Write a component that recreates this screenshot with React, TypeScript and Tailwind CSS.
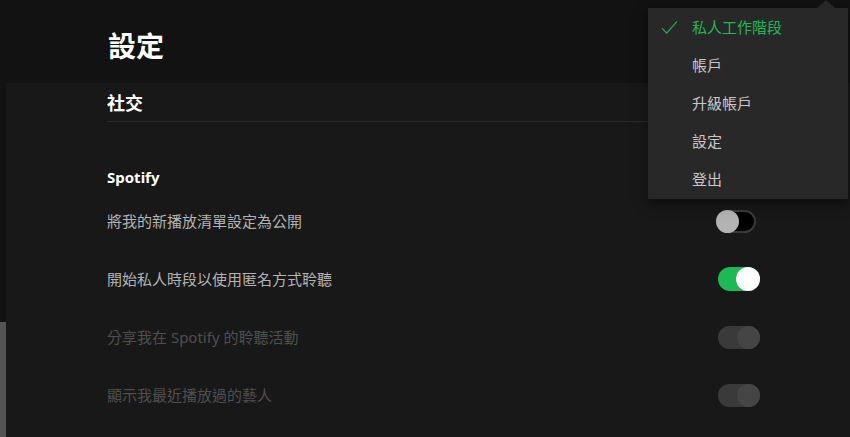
// Settings page with the profile dropdown open

const font = "font-['Noto_Sans','Noto_Sans_CJK_TC',sans-serif]"

const menuItems = ["帳戶", "升級帳戶", "設定", "登出"]

interface Row {
  label: string
  state: "off" | "on" | "disabled"
}

const rows: Row[] = [
  { label: "將我的新播放清單設定為公開", state: "off" },
  { label: "開始私人時段以使用匿名方式聆聽", state: "on" },
  { label: "分享我在 Spotify 的聆聽活動", state: "disabled" },
  { label: "顯示我最近播放過的藝人", state: "disabled" },
]

function Toggle({ state }: { state: Row["state"] }) {
  if (state === "off") {
    return (
      <span className="mr-[4px] flex h-[23px] w-[40px] items-center rounded-full border-2 border-[#3a3a3a] bg-black">
        <span className="-ml-[2px] h-[23px] w-[23px] rounded-full bg-[#b3b3b3]" />
      </span>
    )
  }
  if (state === "on") {
    return (
      <span className="flex h-[24px] w-[42px] items-center justify-end rounded-full bg-[#1db954]">
        <span className="h-[24px] w-[24px] rounded-full bg-white" />
      </span>
    )
  }
  return (
    <span className="flex h-[23px] w-[42px] items-center justify-end rounded-full bg-[#3a3a3a]">
      <span className="h-[23px] w-[23px] rounded-full bg-[#454545]" />
    </span>
  )
}

function Dropdown() {
  return (
    <div className="absolute top-0 right-[2px] w-[200px]">
      <div className="flex justify-end pr-[13px]">
        <span className="h-0 w-0 border-x-[9px] border-b-[8px] border-x-transparent border-b-[#282828]" />
      </div>
      <ul className="flex h-[191px] flex-col bg-[#282828] shadow-[0_4px_12px_rgba(0,0,0,0.5)]">
        <li className="flex h-[38px] items-center gap-[14px] pl-[13px] text-[15px] text-[#1db954]">
          <svg width="17" height="17" viewBox="0 0 24 24" fill="none" stroke="#1db954" strokeWidth="1.6" strokeLinecap="round" strokeLinejoin="round">
            <path d="M2 13.5 8 20 22 4" />
          </svg>
          私人工作階段
        </li>
        {menuItems.map((item) => (
          <li key={item} className="flex h-[38px] items-center pl-[44px] text-[15px] text-[#c8c8c8]">
            {item}
          </li>
        ))}
      </ul>
    </div>
  )
}

export default function App() {
  return (
    <div className={`relative flex h-[437px] w-[850px] flex-col overflow-hidden bg-[#121212] ${font}`}>
      <header className="h-[83px] shrink-0 pt-[29px] pl-[108px]">
        <h1 className="text-[28px] leading-[34px] font-bold text-white">設定</h1>
      </header>

      <div className="flex flex-1">
        <div className="flex w-[6px] flex-col">
          <div className="h-[239px]" />
          <div className="flex-1 bg-[#535353]" />
        </div>

        <main className="flex-1 bg-[#181818] pl-[101px]">
          <div className="w-[653px]">
            <h2 className="border-b border-[#2a2a2a] pt-[8px] pb-[6px] text-[18px] leading-[24px] font-bold text-white">
              社交
            </h2>
            <h3 className="mt-[45px] text-[15px] leading-[20px] font-bold text-white">Spotify</h3>
            <div className="mt-[5px] flex flex-col">
              {rows.map((row) => (
                <div key={row.label} className="flex h-[58px] items-center justify-between">
                  <span
                    className={`text-[15px] ${row.state === "disabled" ? "text-[#4f4f4f]" : "text-[#b3b3b3]"}`}
                  >
                    {row.label}
                  </span>
                  <Toggle state={row.state} />
                </div>
              ))}
            </div>
          </div>
        </main>
      </div>

      <Dropdown />
    </div>
  )
}
